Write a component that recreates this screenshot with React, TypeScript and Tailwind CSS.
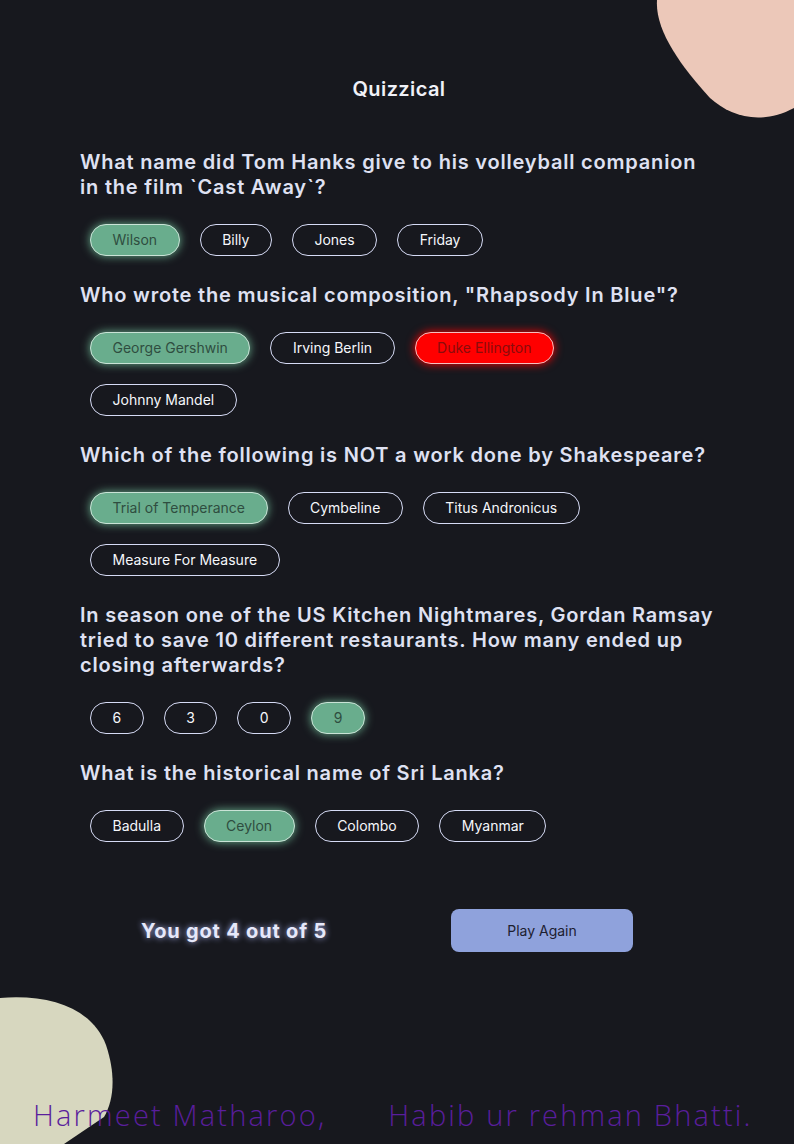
import React from "react";

type Q = {
  question: string;
  answers: string[];
  correct: string;
  picked: string;
};

const questions: Q[] = [
  {
    question: "What name did Tom Hanks give to his volleyball companion in the film `Cast Away`?",
    answers: ["Wilson", "Billy", "Jones", "Friday"],
    correct: "Wilson",
    picked: "Wilson",
  },
  {
    question: 'Who wrote the musical composition, "Rhapsody In Blue"?',
    answers: ["George Gershwin", "Irving Berlin", "Duke Ellington", "Johnny Mandel"],
    correct: "George Gershwin",
    picked: "Duke Ellington",
  },
  {
    question: "Which of the following is NOT a work done by Shakespeare?",
    answers: ["Trial of Temperance", "Cymbeline", "Titus Andronicus", "Measure For Measure"],
    correct: "Trial of Temperance",
    picked: "Trial of Temperance",
  },
  {
    question:
      "In season one of the US Kitchen Nightmares, Gordan Ramsay tried to save 10 different restaurants. How many ended up closing afterwards?",
    answers: ["6", "3", "0", "9"],
    correct: "9",
    picked: "9",
  },
  {
    question: "What is the historical name of Sri Lanka?",
    answers: ["Badulla", "Ceylon", "Colombo", "Myanmar"],
    correct: "Ceylon",
    picked: "Ceylon",
  },
];

function Answer({ text, correct, picked }: { text: string; correct: boolean; picked: boolean }) {
  let cls = "border-[#d6dbf5] text-[#f5f7fb]";
  if (correct) {
    cls = "bg-[#69ad8d] border-[#c9e3d6] text-[#2f4d40] shadow-[0_0_10px_#69ad8d]";
  } else if (picked) {
    cls = "bg-[#ff0000] border-[#f3c0c0] text-[#8a0c0c] shadow-[0_0_10px_#ff0000]";
  }
  return (
    <button className={`rounded-full border px-[21.5px] h-[32px] text-[14px] leading-none ${cls}`}>
      {text}
    </button>
  );
}

export default function App() {
  return (
    <div
      className="relative min-h-[1144px] overflow-hidden bg-[#17181e] text-[#dfe1f2]"
      style={{ fontFamily: "Inter, 'Noto Sans', sans-serif" }}
    >
      {/* blobs */}
      <svg className="absolute left-[640px] top-0" width="154" height="130" viewBox="640 0 154 130">
        <path
          d="M657 0 C655 30 680 65 710 98 C730 116 760 126 794 108 L794 0 Z"
          fill="#ecc8b9"
        />
      </svg>
      <svg className="absolute left-0 top-[990px]" width="130" height="154" viewBox="0 990 130 154">
        <path
          d="M0 998 C50 994 92 1008 106 1045 C116 1075 114 1100 104 1117 L64 1144 L0 1144 Z"
          fill="#d7d7bf"
        />
      </svg>

      <div className="relative w-[634px] mx-auto pt-[74px]">
        <h1 className="text-center text-[20px] font-semibold tracking-[0.02em] text-[#f0f1f8] pl-[4px]">
          Quizzical
        </h1>

        <div className="mt-[46px] flex flex-col gap-[27px]">
          {questions.map((q, i) => (
            <div key={i}>
              <h2 className="text-[20px] leading-[25px] font-semibold tracking-[0.04em]">{q.question}</h2>
              <div className="mt-[24px] pl-[10px] flex flex-wrap gap-x-[20px] gap-y-[20px]">
                {q.answers.map((a) => (
                  <Answer key={a} text={a} correct={a === q.correct} picked={a === q.picked} />
                ))}
              </div>
            </div>
          ))}
        </div>

        <div className="mt-[67px] flex items-center pl-[61px]">
          <p className="text-[20px] font-bold tracking-[0.04em] text-[#e6e8fa] [text-shadow:0_0_6px_#aab4f0]">
            You got 4 out of 5
          </p>
          <button className="ml-auto mr-[81px] w-[182px] h-[43px] rounded-[8px] bg-[#8fa2dc] text-[14px] text-[#1d2030]">
            Play Again
          </button>
        </div>
      </div>

      <div
        className="relative mt-[141px] flex pl-[33px] text-[29px] font-light tracking-[0.075em] text-[#5a1e9c]"
        style={{ fontFamily: "'Open Sans', sans-serif" }}
      >
        <span>Harmeet Matharoo,</span>
        <span className="ml-[62px]">Habib ur rehman Bhatti.</span>
      </div>
    </div>
  );
}
